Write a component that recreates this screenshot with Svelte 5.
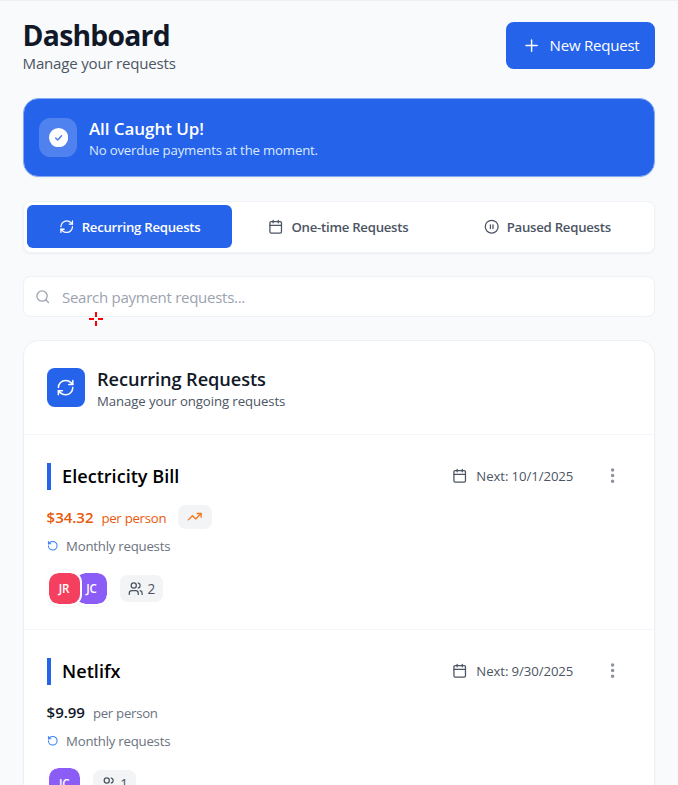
<script>
  const tabs = [
    { label: 'Recurring Requests', icon: 'refresh', active: true },
    { label: 'One-time Requests', icon: 'calendar' },
    { label: 'Paused Requests', icon: 'pause' }
  ];
  const requests = [
    {
      name: 'Electricity Bill', next: '10/1/2025', price: '$34.32', variable: true,
      people: [{ initials: 'JR', color: '#f43f5e' }, { initials: 'JC', color: '#8b5cf6' }]
    },
    {
      name: 'Netlifx', next: '9/30/2025', price: '$9.99', variable: false,
      people: [{ initials: 'JC', color: '#8b5cf6' }]
    }
  ];
</script>

{#snippet icon(name, size, width = 2)}
  <svg width={size} height={size} viewBox="0 0 24 24" fill="none" stroke="currentColor" stroke-width={width} stroke-linecap="round" stroke-linejoin="round">
    {#if name === 'refresh'}
      <path d="M3 12a9 9 0 0 1 9-9 9.75 9.75 0 0 1 6.74 2.74L21 8" /><path d="M21 3v5h-5" />
      <path d="M21 12a9 9 0 0 1-9 9 9.75 9.75 0 0 1-6.74-2.74L3 16" /><path d="M8 16H3v5" />
    {:else if name === 'calendar'}
      <path d="M8 2v4M16 2v4M3 10h18" /><rect x="3" y="4" width="18" height="18" rx="2" />
    {:else if name === 'pause'}
      <circle cx="12" cy="12" r="10" /><path d="M10 15V9M14 15V9" />
    {:else if name === 'plus'}
      <path d="M5 12h14M12 5v14" />
    {:else if name === 'search'}
      <circle cx="11" cy="11" r="8" /><path d="m21 21-4.3-4.3" />
    {:else if name === 'trend'}
      <path d="M22 7 13.5 15.5 8.5 10.5 2 17" /><path d="M16 7h6v6" />
    {:else if name === 'rotate'}
      <path d="M3 12a9 9 0 1 0 9-9 9.75 9.75 0 0 0-6.74 2.74L3 8" /><path d="M3 3v5h5" />
    {:else if name === 'users'}
      <path d="M16 21v-2a4 4 0 0 0-4-4H6a4 4 0 0 0-4 4v2" /><circle cx="9" cy="7" r="4" />
      <path d="M22 21v-2a4 4 0 0 0-3-3.87M16 3.13a4 4 0 0 1 0 7.75" />
    {:else if name === 'dots'}
      <circle cx="12" cy="12" r="1" /><circle cx="12" cy="5" r="1" /><circle cx="12" cy="19" r="1" />
    {/if}
  </svg>
{/snippet}

<div class="page">
  <header>
    <div>
      <h1>Dashboard</h1>
      <p class="lead">Manage your requests</p>
    </div>
    <button class="new">{@render icon('plus', 19.2, 1.8)}<span>New Request</span></button>
  </header>

  <section class="banner">
    <div class="tile">
      <svg width="19.2" height="19.2" viewBox="0 0 20 20">
        <circle cx="10" cy="10" r="10" fill="#fff" />
        <path d="m7 10.4 2.1 2.1 4-4.4" fill="none" stroke="#4b7fee" stroke-width="1.6" stroke-linecap="round" stroke-linejoin="round" />
      </svg>
    </div>
    <div>
      <h2>All Caught Up!</h2>
      <p>No overdue payments at the moment.</p>
    </div>
  </section>

  <nav>
    {#each tabs as tab}
      <button class:active={tab.active}>{@render icon(tab.icon, 15.4)}<span>{tab.label}</span></button>
    {/each}
  </nav>

  <label class="search">
    {@render icon('search', 15.4)}
    <input placeholder="Search payment requests..." />
  </label>

  <section class="card">
    <div class="card-head">
      <div class="badge">{@render icon('refresh', 19.2, 1.9)}</div>
      <div>
        <h2>Recurring Requests</h2>
        <p>Manage your ongoing requests</p>
      </div>
    </div>
    {#each requests as r}
      <article>
        <div class="top">
          <h3>{r.name}</h3>
          <div class="due">{@render icon('calendar', 15.4)}<span>Next: {r.next}</span></div>
          <button class="more">{@render icon('dots', 19.2, 2.4)}</button>
        </div>
        <div class="price" class:variable={r.variable}>
          <strong>{r.price}</strong><span>per person</span>
          {#if r.variable}<i class="chip">{@render icon('trend', 15.4)}</i>{/if}
        </div>
        <div class="cycle">{@render icon('rotate', 11.5, 2.2)}<span>Monthly requests</span></div>
        <div class="people">
          <div class="avatars">
            {#each r.people as p, i}
              <b style:background-color={p.color} style:z-index={9 - i}>{p.initials}</b>
            {/each}
          </div>
          <div class="count">{@render icon('users', 15.4)}<span>{r.people.length}</span></div>
        </div>
      </article>
    {/each}
  </section>

  <svg class="cursor" width="14" height="14" viewBox="0 0 14 14" shape-rendering="crispEdges"><path d="M7 0v5M7 9v5M0 7h5M9 7h5" stroke="#f00" stroke-width="2" /></svg>
</div>

<style>
  :global(body) { margin: 0; overflow: hidden; }
  .page {
    position: relative;
    box-sizing: border-box;
    height: 785px;
    overflow: hidden;
    padding: 20px 23.4px 0 22.6px;
    border-top: 1px solid #eef0f3;
    background: #f9fafc;
    color: #111827;
    font-family: "Open Sans", "Noto Sans", sans-serif;
    font-size: 13.2px;
  }
  h1, h2, h3, p { margin: 0; }
  svg { display: block; flex: none; }
  span { white-space: nowrap; }
  button { font: inherit; border: 0; background: none; padding: 0; }

  header { display: flex; justify-content: space-between; height: 77px; }
  h1 { font-size: 28.3px; line-height: 29px; letter-spacing: -0.75px; font-weight: 700; }
  .lead { padding-top: 2px; font-size: 15.05px; line-height: 23px; letter-spacing: -0.2px; color: #4b5563; }
  .new {
    display: flex; align-items: center; gap: 8.8px;
    box-sizing: border-box; width: 149px; height: 46.5px; margin-top: 1.4px; padding-left: 16px;
    border-radius: 7.7px; background: #2563eb; color: #fff;
    font-size: 15.05px; letter-spacing: -0.24px;
  }
  .new span { padding-bottom: 2px; }

  .banner {
    display: flex; align-items: center; gap: 11.5px;
    box-sizing: border-box; height: 79px; padding: 0 15.4px;
    border: 1px solid #84aaf6; border-radius: 15.4px;
    background: #2563eb; color: #fff;
    box-shadow: 0 1px 2px #0000000d;
  }
  .tile, .badge { display: flex; align-items: center; justify-content: center; width: 38.4px; height: 38.4px; }
  .tile { border-radius: 11.5px; background: #ffffff33; }
  .banner h2 { padding-top: 3px; font-size: 17px; line-height: 23px; letter-spacing: -0.05px; font-weight: 600; }
  .banner p { line-height: 21px; letter-spacing: -0.17px; color: #dbeafe; }

  nav {
    display: grid; grid-template-columns: repeat(3, 1fr); gap: 3.8px;
    box-sizing: border-box; height: 52px; margin-top: 23.5px; padding: 3.8px 3.8px 3.8px 3.4px;
    border: 1px solid #eff2f7; border-radius: 7.7px; background: #fff;
    box-shadow: 0 1px 2px #0000000d;
  }
  nav button {
    display: flex; align-items: center; justify-content: center; gap: 7.7px;
    border-radius: 5.8px; color: #4b5563; font-weight: 600; letter-spacing: -0.26px;
  }
  nav .active { background: #2563eb; color: #fff; }

  .search {
    display: flex; align-items: center; gap: 12px;
    box-sizing: border-box; height: 41px; margin-top: 23.5px; padding: 0 11px;
    border: 1px solid #eef1f6; border-radius: 7.7px; background: #fff; color: #9ca3af;
  }
  input {
    flex: 1; padding: 0; border: 0; outline: 0; background: none;
    font: 15.05px "Open Sans", "Noto Sans", sans-serif; letter-spacing: -0.29px;
  }
  input::placeholder { color: #9ca3af; opacity: 1; }

  .card {
    margin-top: 23px; border: 1px solid #edf1f6; border-radius: 15.4px;
    background: #fff; box-shadow: 0 1px 2px #0000000d;
  }
  .card-head { display: flex; align-items: center; gap: 12px; height: 93px; padding: 0 23px; }
  .badge { border-radius: 7.7px; background: #2563eb; color: #fff; }
  .card-head > div:last-child { padding-top: 2px; }
  .card-head h2 { font-size: 18.2px; line-height: 25px; letter-spacing: -0.07px; font-weight: 600; }
  .card-head p { line-height: 18px; letter-spacing: -0.09px; color: #4b5563; }

  article { box-sizing: border-box; height: 195px; padding: 22px 23px 0; border-top: 1px solid #f3f5f9; }
  .top { display: flex; align-items: center; height: 38px; }
  h3 {
    flex: 1; border-left: 4px solid #2563eb; padding-left: 11.5px;
    color: #000; font-size: 18.1px; line-height: 27px; font-weight: 600;
  }
  .due { display: flex; align-items: center; gap: 8.5px; width: 121px; color: #4b5563; letter-spacing: -0.09px; }
  .more { margin: 0 8px 0 30px; color: #8b929e; }
  .price { display: flex; align-items: center; height: 24px; margin-top: 10px; color: #6b7280; }
  .price strong { margin-right: 8px; color: #111827; font-size: 15.05px; font-weight: 600; letter-spacing: -0.05px; }
  .price span { padding-top: 1px; letter-spacing: -0.27px; }
  .variable, .price.variable strong { color: #ea580c; }
  .chip { display: flex; margin-left: 11.4px; padding: 4px 9.6px; border-radius: 7.7px; background: #f3f4f6; color: #f97316; }
  .cycle { display: flex; align-items: center; gap: 8px; height: 20px; margin-top: 7px; color: #3b82f6; }
  .cycle span { color: #6b7280; letter-spacing: -0.22px; }
  .people { display: flex; align-items: center; gap: 11.5px; height: 35px; margin-top: 15px; }
  .avatars { display: flex; }
  .avatars b {
    position: relative; display: flex; align-items: center; justify-content: center;
    width: 31px; height: 31px; border: 2px solid #fff; border-radius: 11.5px;
    background-clip: padding-box; box-shadow: 0 1px 2px #0000000d;
    color: #fff; font-size: 11.6px; font-weight: 600; letter-spacing: -0.2px;
  }
  .avatars b + b { margin-left: -7.7px; }
  .count {
    display: flex; align-items: center; gap: 4px; height: 27px; padding: 0 7.7px;
    border-radius: 7.7px; background: #f3f4f6; color: #4b5563; font-size: 13.6px; font-weight: 500;
  }
  .cursor { position: absolute; left: 89px; top: 311px; }
</style>
